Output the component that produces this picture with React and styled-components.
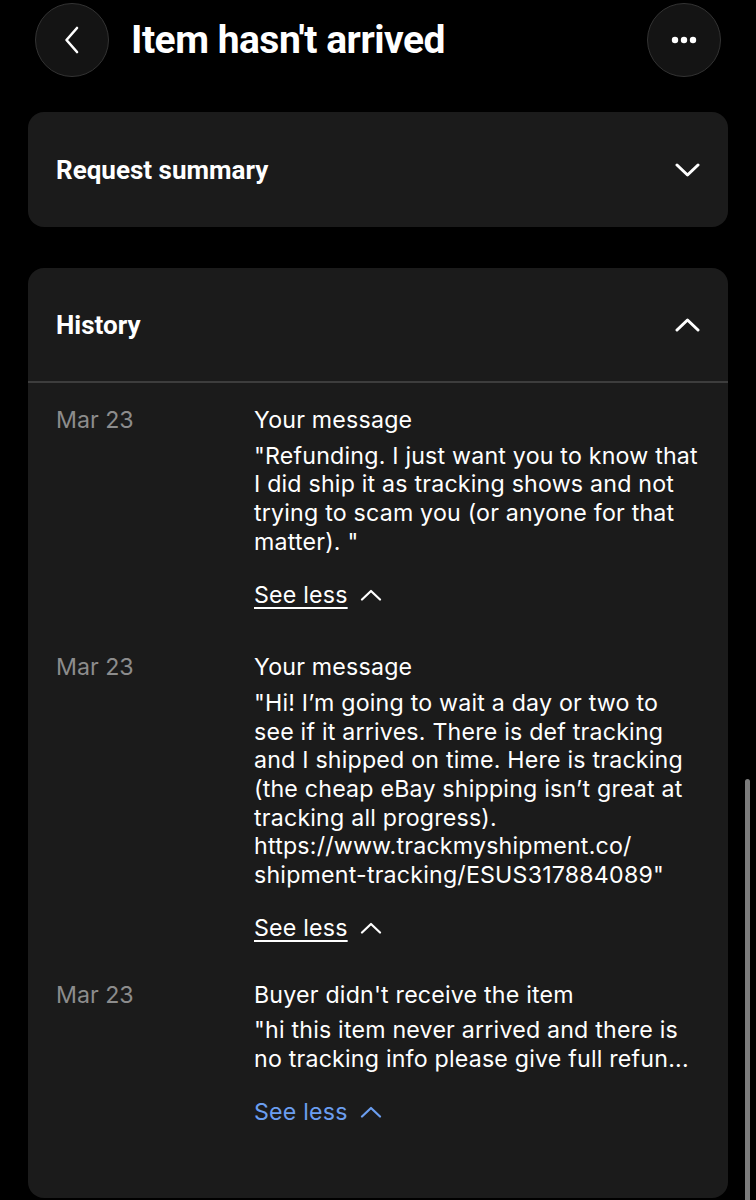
import styled, { createGlobalStyle } from "styled-components";

const GlobalStyle = createGlobalStyle`
    html, body {
        margin: 0;
        padding: 0;
        background: #000;
        overflow: hidden;
    }
    * {
        box-sizing: border-box;
    }
`;

const Page = styled.div`
    position: relative;
    width: 756px;
    height: 1200px;
    overflow: hidden;
    background: #000;
    color: #fff;
    font-family: Inter, "Noto Sans", sans-serif;
`;

const TopBar = styled.header`
    display: flex;
    align-items: center;
    height: 80px;
    padding: 3px 35px 3px 35px;
`;

const RoundButton = styled.button`
    flex: none;
    width: 74px;
    height: 74px;
    border-radius: 50%;
    border: 1.5px solid #333;
    background: #141414;
    display: flex;
    align-items: center;
    justify-content: center;
    padding: 0;
    color: #fff;
`;

const Title = styled.h1`
    flex: 1;
    margin: 0 0 0 22px;
    font-family: Roboto, "Liberation Sans", sans-serif;
    font-weight: 700;
    font-size: 39px;
    letter-spacing: -0.5px;
    color: #fff;
`;

const Cards = styled.div`
    display: flex;
    flex-direction: column;
    gap: 41px;
    padding: 32px 28px 0;
`;

const Card = styled.section`
    background: #1b1b1b;
    border-radius: 16px;
    overflow: hidden;
    ${(p) => p.$fill && "height: 930px;"}
`;

const CardHeader = styled.div`
    display: flex;
    align-items: center;
    justify-content: space-between;
    height: 115px;
    padding: 0 28px;
    ${(p) => p.$divided && "border-bottom: 2px solid #3d3d3d;"}
`;

const CardTitle = styled.h2`
    margin: 0;
    font-family: Roboto, "Liberation Sans", sans-serif;
    font-weight: 700;
    font-size: 26px;
    color: #fff;
`;

const Entries = styled.div`
    display: flex;
    flex-direction: column;
    gap: 42px;
    padding: 23px 28px 0;
`;

const Entry = styled.div`
    display: grid;
    grid-template-columns: 198px 1fr;
    font-size: 23.2px;
    line-height: 28.7px;
    letter-spacing: 0.2px;
    ${(p) => p.$shift && `margin-top: ${p.$shift}px;`}
`;

const DateLabel = styled.div`
    color: #8c8c8c;
    letter-spacing: 0;
`;

const Body = styled.div`
    display: flex;
    flex-direction: column;
`;

const EntryTitle = styled.div`
    color: #fff;
    margin-bottom: 7px;
`;

const Message = styled.div`
    color: #fff;
`;

const SeeLess = styled.a`
    display: flex;
    align-items: center;
    gap: 12px;
    margin-top: 24px;
    color: ${(p) => (p.$accent ? "#6b9ef0" : "#fff")};
    text-decoration: none;

    span {
        text-decoration: ${(p) => (p.$accent ? "none" : "underline")};
        text-decoration-thickness: 1.5px;
        text-underline-offset: 4px;
    }
`;

const Scrollbar = styled.div`
    position: absolute;
    right: 6px;
    top: 779px;
    width: 5px;
    height: 440px;
    border-radius: 3px;
    background: #7c7c7c;
`;

function Chevron({ dir }) {
    const points = dir === "down" ? "2,2 12.5,12 23,2" : "2,12 12.5,2 23,12";
    return (
        <svg width="25" height="14" viewBox="0 0 25 14" fill="none">
            <polyline points={points} stroke="currentColor" strokeWidth="3" strokeLinecap="round" strokeLinejoin="round" />
        </svg>
    );
}

function HistoryEntry({ date, title, children, accent, shift }) {
    return (
        <Entry $shift={shift}>
            <DateLabel>{date}</DateLabel>
            <Body>
                <EntryTitle>{title}</EntryTitle>
                <Message>{children}</Message>
                <SeeLess $accent={accent}>
                    <span>See less</span>
                    <svg width="22" height="12" viewBox="0 0 22 12" fill="none">
                        <polyline points="2,10.5 11,2 20,10.5" stroke="currentColor" strokeWidth="2.2" strokeLinecap="round" strokeLinejoin="round" />
                    </svg>
                </SeeLess>
            </Body>
        </Entry>
    );
}

export default function App() {
    return (
        <Page>
            <GlobalStyle />
            <TopBar>
                <RoundButton aria-label="Back">
                    <svg width="16" height="28" viewBox="0 0 16 28" fill="none">
                        <polyline points="13,2 2.5,14 13,26" stroke="#fff" strokeWidth="2.6" strokeLinecap="round" strokeLinejoin="round" />
                    </svg>
                </RoundButton>
                <Title>Item hasn't arrived</Title>
                <RoundButton aria-label="More">
                    <svg width="26" height="8" viewBox="0 0 26 8">
                        <circle cx="4" cy="4" r="3.2" fill="#fff" />
                        <circle cx="13" cy="4" r="3.2" fill="#fff" />
                        <circle cx="22" cy="4" r="3.2" fill="#fff" />
                    </svg>
                </RoundButton>
            </TopBar>

            <Cards>
                <Card>
                    <CardHeader>
                        <CardTitle>Request summary</CardTitle>
                        <Chevron dir="down" />
                    </CardHeader>
                </Card>

                <Card $fill>
                    <CardHeader $divided>
                        <CardTitle>History</CardTitle>
                        <Chevron dir="up" />
                    </CardHeader>
                    <Entries>
                        <HistoryEntry date="Mar 23" title="Your message">
                            "Refunding. I just want you to know that I did ship it as tracking shows and not trying to scam you (or anyone for that matter). "
                        </HistoryEntry>
                        <HistoryEntry date="Mar 23" title="Your message" shift={2}>
                            "Hi! I’m going to wait a day or two to see if it arrives. There is def tracking and I shipped on time. Here is tracking (the cheap eBay shipping isn’t great at tracking all progress). https://www.trackmyshipment.co/ shipment-tracking/ESUS317884089"
                        </HistoryEntry>
                        <HistoryEntry date="Mar 23" title="Buyer didn't receive the item" accent shift={-4}>
                            "hi this item never arrived and there is no tracking info please give full refun...
                        </HistoryEntry>
                    </Entries>
                </Card>
            </Cards>
            <Scrollbar />
        </Page>
    );
}
